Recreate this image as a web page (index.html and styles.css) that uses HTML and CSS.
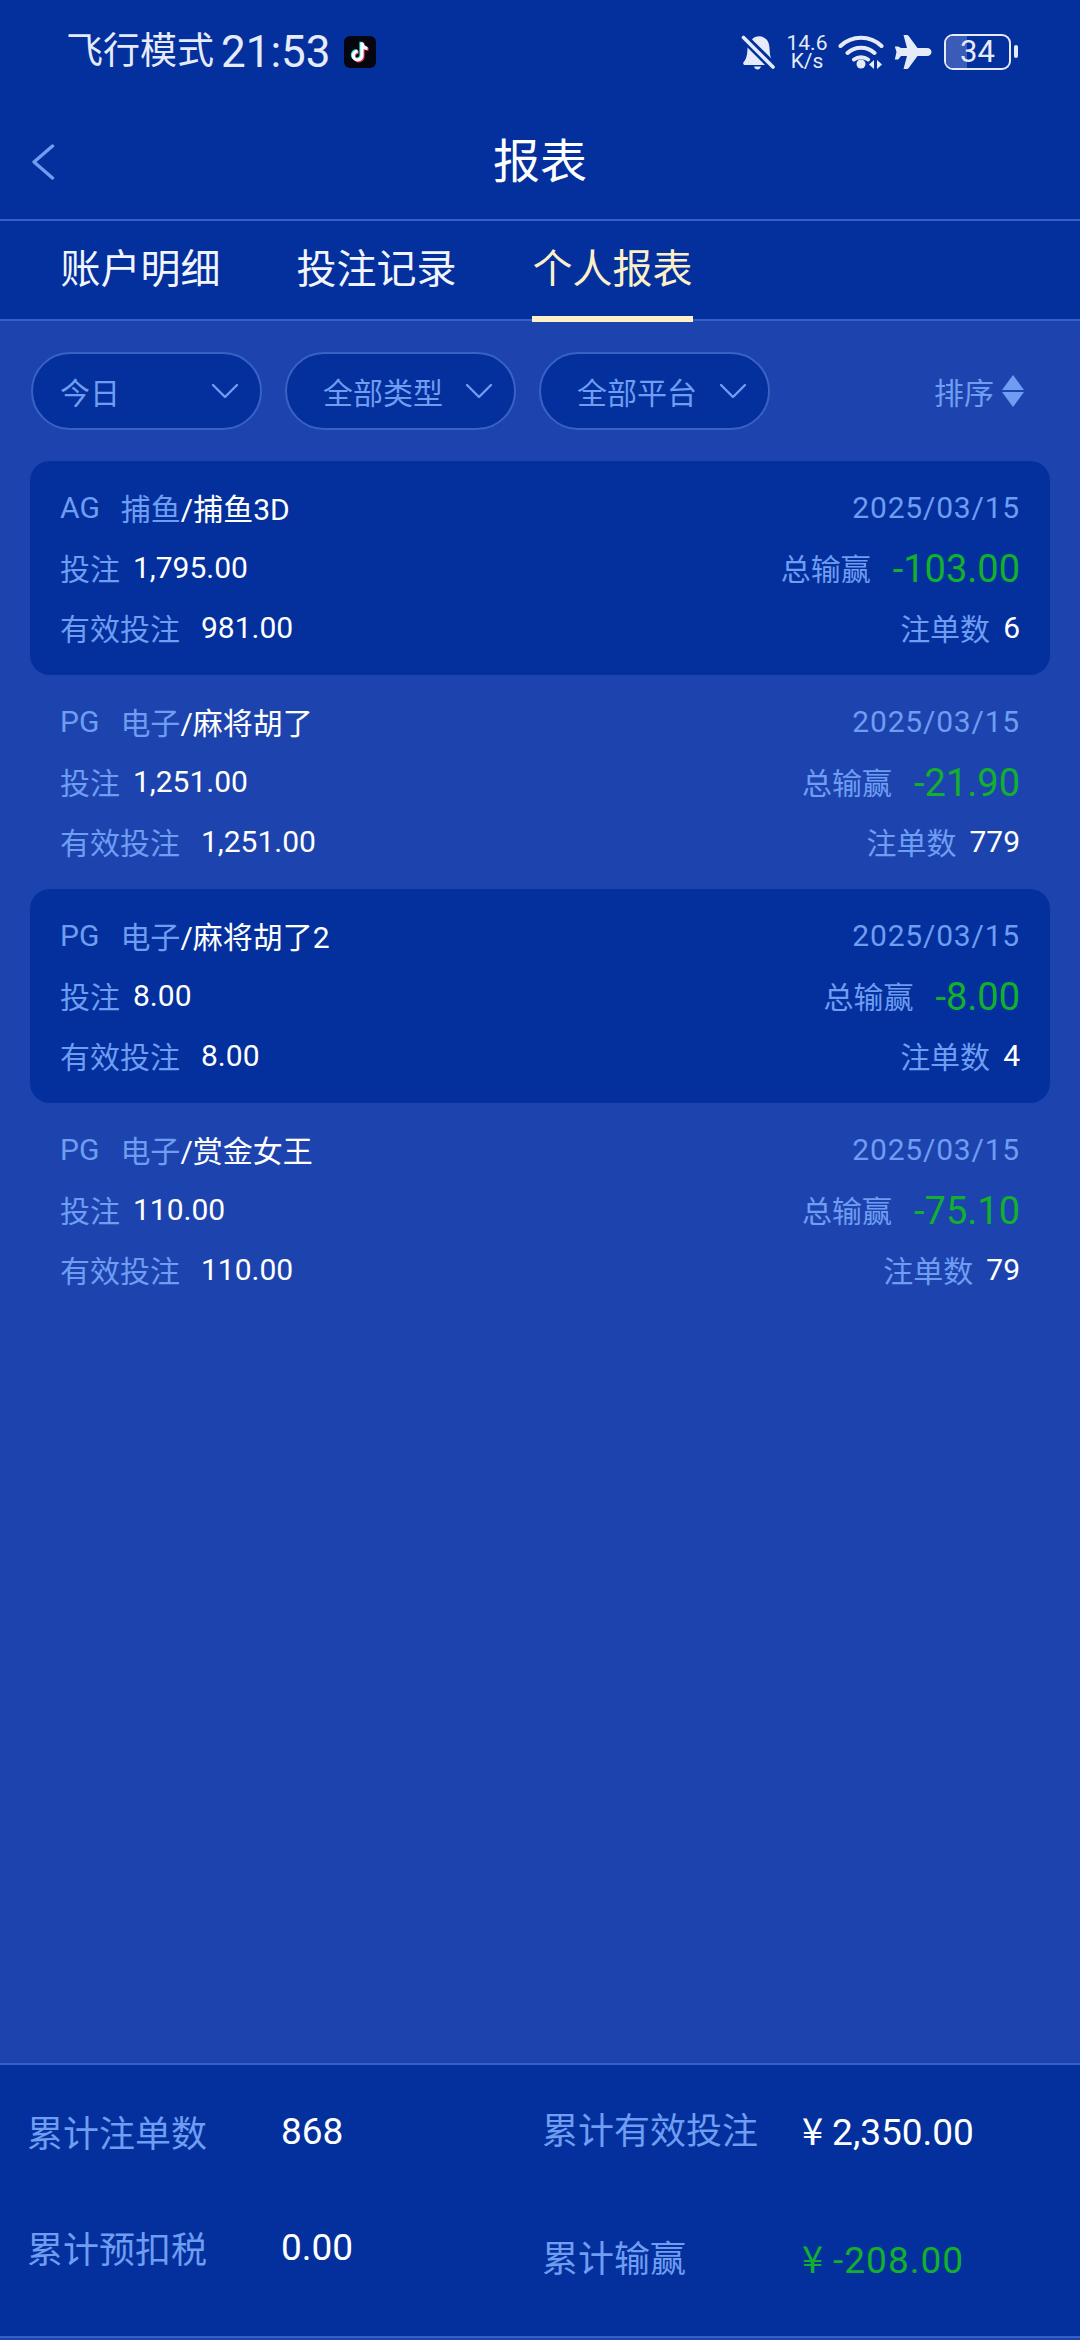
FILE: index.html
```html
<!DOCTYPE html>
<html lang="zh-CN">
<head>
<meta charset="utf-8">
<title>报表</title>
<link rel="stylesheet" href="styles.css">
</head>
<body>
<div class="page">
  <header class="top">
    <div class="status">
      <div class="status-left">
        <span class="mode">飞行模式</span>
        <span class="clock">21:53</span>
        <svg class="tt" viewBox="0 0 32 32">
          <rect width="32" height="32" rx="6" fill="#05060f"/>
          <path d="M18 6.500v13.200a4.300 4.300 0 1 1-4.300-4.300M18 7c.4 3.200 2.500 5.200 5.500 5.500" fill="none" stroke="#25f4ee" stroke-width="3.200" transform="translate(-1 -.8)"/>
          <path d="M18 6.500v13.200a4.300 4.300 0 1 1-4.300-4.300M18 7c.4 3.200 2.500 5.200 5.500 5.500" fill="none" stroke="#fe2c55" stroke-width="3.200" transform="translate(1 .8)"/>
          <path d="M18 6.500v13.200a4.300 4.300 0 1 1-4.300-4.300M18 7c.4 3.200 2.500 5.200 5.500 5.500" fill="none" stroke="#fff" stroke-width="3.200"/>
        </svg>
      </div>
      <div class="status-right">
        <svg class="i-bell" viewBox="0 0 36 36">
          <path d="M12 5.500C15 1.500 22 1 26 5c3.500 3.500 3.500 8 3.800 13 .1 2.500.6 4.500 1.600 6.500zM7.500 13.500 25 31H5c-1.500 0-2.500-1.800-1.300-3C6.500 25 7.500 20 7.500 13.500zM14 32.500h7c-.5 2-2 3-3.500 3s-3-1-3.500-3z" fill="#e6ebfa"/>
          <path d="M3.500 3.500 33 33" stroke="#e6ebfa" stroke-width="3.600" stroke-linecap="round"/>
        </svg>
        <div class="speed"><span>14.6</span><span>K/s</span></div>
        <svg class="i-wifi" viewBox="0 0 46 36">
          <path d="M2.500 12C14 1 32 1 43.500 12M9.500 19C17 12 29 12 36.500 19M16 25.500c4-3 10-3 14 0" fill="none" stroke="#e6ebfa" stroke-width="4" stroke-linecap="round"/>
          <circle cx="23" cy="30" r="4.500" fill="#e6ebfa"/>
          <path d="M36 26v9l-5-4.500zM39 26v9l5-4.500z" fill="#e6ebfa"/>
        </svg>
        <svg class="i-plane" viewBox="0 0 38 36">
          <path d="M9.500 1h3.300c.8 0 1.500.4 1.900 1L23.500 14H33c2.800 0 4.500 1.800 4.500 4s-1.700 4-4.500 4h-9.500l-8.800 12c-.4.600-1.100 1-1.900 1H9.500l3.500-13H7l-2.800 3.500H.8L2.500 18 .8 12.500h3.400L7 14h6z" fill="#e6ebfa"/>
        </svg>
        <div class="battery">
          <div class="batt-body"><div class="batt-fill"></div><span class="batt-num">34</span></div>
          <div class="batt-nub"></div>
        </div>
      </div>
    </div>
    <div class="nav">
      <svg class="back" viewBox="0 0 24 36"><path d="M21.500 2 3 18l18.500 16" fill="none" stroke="#6e9df2" stroke-width="3.400" stroke-linecap="round" stroke-linejoin="round"/></svg>
      <h1 class="title">报表</h1>
    </div>
    <nav class="tabs">
      <span class="tab">账户明细</span>
      <span class="tab">投注记录</span>
      <span class="tab active">个人报表</span>
    </nav>
  </header>

  <section class="filters">
    <div class="pill"><span>今日</span><svg class="chev" viewBox="0 0 28 16"><path d="M2 2l12 12L26 2" fill="none" stroke="#6e9df2" stroke-width="2.400" stroke-linecap="round" stroke-linejoin="round"/></svg></div>
    <div class="pill wide"><span>全部类型</span><svg class="chev" viewBox="0 0 28 16"><path d="M2 2l12 12L26 2" fill="none" stroke="#6e9df2" stroke-width="2.400" stroke-linecap="round" stroke-linejoin="round"/></svg></div>
    <div class="pill wide"><span>全部平台</span><svg class="chev" viewBox="0 0 28 16"><path d="M2 2l12 12L26 2" fill="none" stroke="#6e9df2" stroke-width="2.400" stroke-linecap="round" stroke-linejoin="round"/></svg></div>
    <div class="sort"><span>排序</span><svg class="sort-ico" viewBox="0 0 22 32"><path d="M11 0l11 15H0z" fill="#6e9df2"/><path d="M11 32L0 17h22z" fill="#6e9df2"/></svg></div>
  </section>

  <main class="list">
    <article class="row dark">
      <div class="line"><div class="group"><span class="lab plat">AG</span><span class="lab">捕鱼<b class="val">/捕鱼3D</b></span></div><span class="lab date">2025/03/15</span></div>
      <div class="line"><div class="group short"><span class="lab">投注</span><span class="val">1,795.00</span></div><div class="group win"><span class="lab">总输赢</span><span class="amount">-103.00</span></div></div>
      <div class="line"><div class="group"><span class="lab">有效投注</span><span class="val">981.00</span></div><div class="group short"><span class="lab">注单数</span><span class="val">6</span></div></div>
    </article>
    <article class="row">
      <div class="line"><div class="group"><span class="lab plat">PG</span><span class="lab">电子<b class="val">/麻将胡了</b></span></div><span class="lab date">2025/03/15</span></div>
      <div class="line"><div class="group short"><span class="lab">投注</span><span class="val">1,251.00</span></div><div class="group win"><span class="lab">总输赢</span><span class="amount">-21.90</span></div></div>
      <div class="line"><div class="group"><span class="lab">有效投注</span><span class="val">1,251.00</span></div><div class="group short"><span class="lab">注单数</span><span class="val">779</span></div></div>
    </article>
    <article class="row dark">
      <div class="line"><div class="group"><span class="lab plat">PG</span><span class="lab">电子<b class="val">/麻将胡了2</b></span></div><span class="lab date">2025/03/15</span></div>
      <div class="line"><div class="group short"><span class="lab">投注</span><span class="val">8.00</span></div><div class="group win"><span class="lab">总输赢</span><span class="amount">-8.00</span></div></div>
      <div class="line"><div class="group"><span class="lab">有效投注</span><span class="val">8.00</span></div><div class="group short"><span class="lab">注单数</span><span class="val">4</span></div></div>
    </article>
    <article class="row">
      <div class="line"><div class="group"><span class="lab plat">PG</span><span class="lab">电子<b class="val">/赏金女王</b></span></div><span class="lab date">2025/03/15</span></div>
      <div class="line"><div class="group short"><span class="lab">投注</span><span class="val">110.00</span></div><div class="group win"><span class="lab">总输赢</span><span class="amount">-75.10</span></div></div>
      <div class="line"><div class="group"><span class="lab">有效投注</span><span class="val">110.00</span></div><div class="group short"><span class="lab">注单数</span><span class="val">79</span></div></div>
    </article>
  </main>

  <footer class="summary">
    <div class="col col-left">
      <div class="stat"><span class="s-lab">累计注单数</span><span class="s-val">868</span></div>
      <div class="stat"><span class="s-lab">累计预扣税</span><span class="s-val">0.00</span></div>
    </div>
    <div class="col col-right">
      <div class="stat"><span class="s-lab">累计有效投注</span><span class="s-val"><i class="yen">¥</i>2,350.00</span></div>
      <div class="stat"><span class="s-lab">累计输赢</span><span class="s-val green"><i class="yen">¥</i>-208.00</span></div>
    </div>
  </footer>
</div>
</body>
</html>
```
FILE: styles.css
```css
* { box-sizing: border-box; }
html, body { margin: 0; padding: 0; }
body {
  font-family: Roboto, "Noto Sans CJK SC", sans-serif;
  color: #fff;
  background: #1d44ae;
}
.page {
  width: 1080px;
  height: 2340px;
  display: flex;
  flex-direction: column;
  overflow: hidden;
}
.top { background: #03309c; }

.status {
  height: 101px;
  padding: 2px 62px 0 66px;
  display: flex;
  align-items: center;
  justify-content: space-between;
  color: #e6ebfa;
}
.status-left { display: flex; align-items: center; }
.mode { font-size: 37px; line-height: 44px; }
.clock { font-size: 44px; line-height: 44px; margin-left: 7px; }
.tt { width: 32px; height: 32px; margin-left: 13px; }
.status-right { display: flex; align-items: center; }
.i-bell { width: 36px; height: 36px; }
.speed {
  display: flex;
  flex-direction: column;
  align-items: center;
  width: 42px;
  margin-left: 10px;
  font-size: 21px;
  line-height: 18px;
}
.i-wifi { width: 46px; height: 36px; margin-left: 10px; }
.i-plane { width: 38px; height: 36px; margin-left: 10px; }
.battery { display: flex; align-items: center; margin-left: 12px; }
.batt-body {
  position: relative;
  width: 67px;
  height: 36px;
  border: 2px solid #e6ebfa;
  border-radius: 9px;
  display: flex;
  align-items: center;
  justify-content: center;
  overflow: hidden;
}
.batt-fill {
  position: absolute;
  left: 0;
  top: 0;
  bottom: 0;
  width: 34%;
  background: #3a5cb8;
}
.batt-num { position: relative; font-size: 31px; line-height: 32px; }
.batt-nub {
  width: 4px;
  height: 13px;
  margin-left: 3px;
  border-radius: 2px;
  background: #e6ebfa;
}

.nav {
  height: 120px;
  padding-top: 4px;
  display: flex;
  align-items: center;
  justify-content: center;
  position: relative;
  border-bottom: 2px solid #3560c8;
}
.back {
  position: absolute;
  left: 31px;
  top: 43px;
  width: 24px;
  height: 36px;
}
.title { margin: 0; font-size: 47px; line-height: 60px; font-weight: 400; }

.tabs {
  height: 100px;
  padding: 0 0 0 60px;
  display: flex;
  gap: 75px;
  border-bottom: 2px solid #3560c8;
}
.tab {
  position: relative;
  width: 161px;
  white-space: nowrap;
  text-align: center;
  font-size: 40px;
  line-height: 98px;
  color: #f2f5fd;
}
.tab.active { color: #fdf0c8; }
.tab.active::after {
  content: "";
  position: absolute;
  left: 0;
  right: 0;
  bottom: -3px;
  height: 6px;
  background: #fdf0c8;
}

.filters {
  padding: 31px 56px 0 31px;
  display: flex;
  align-items: center;
  gap: 23px;
}
.pill {
  width: 231px;
  height: 78px;
  padding: 0 21px 0 27px;
  display: flex;
  align-items: center;
  justify-content: space-between;
  background: #03309c;
  border: 2px solid #3a62c4;
  border-radius: 39px;
  color: #6e9df2;
  font-size: 30px;
}
.pill.wide { padding-left: 36px; }
.chev { width: 28px; height: 16px; }
.sort {
  margin-left: auto;
  display: flex;
  align-items: center;
  gap: 8px;
  color: #6e9df2;
  font-size: 30px;
}
.sort-ico { width: 22px; height: 32px; }

.list { flex: 1; padding: 31px 30px 0; }
.row { height: 214px; padding: 16px 30px 0; border-radius: 20px; }
.row.dark { background: #03309c; }
.line {
  height: 60px;
  display: flex;
  align-items: center;
  justify-content: space-between;
}
.group { display: flex; align-items: center; gap: 21px; }
.group.short { gap: 13px; }
.group.win { gap: 22px; }
.lab { font-size: 30px; color: #6e9df2; }
.val { font-size: 30px; font-weight: 400; color: #fff; }
.date { letter-spacing: .8px; }
.amount { font-size: 38px; color: #12b02c; line-height: 60px; padding-top: 4px; }

.summary {
  height: 275px;
  margin-bottom: 2px;
  padding: 0 0 0 27px;
  display: flex;
  background: #03309c;
  border-top: 2px solid #3560c8;
  border-bottom: 2px solid #3560c8;
}
.col { display: flex; flex-direction: column; }
.col-left { width: 515px; padding-top: 41px; gap: 66px; }
.col-right { padding-top: 38px; gap: 78px; }
.stat { display: flex; align-items: center; height: 50px; }
.s-lab { font-size: 36px; color: #6e9df2; }
.col-left .s-lab { width: 254px; }
.col-right .s-lab { width: 260px; }
.s-val { font-size: 37px; color: #fff; }
.green { color: #12b02c; letter-spacing: 1px; }
.yen { font-family: "Noto Sans CJK SC", sans-serif; font-style: normal; font-size: 38px; margin-right: 9px; }
```
